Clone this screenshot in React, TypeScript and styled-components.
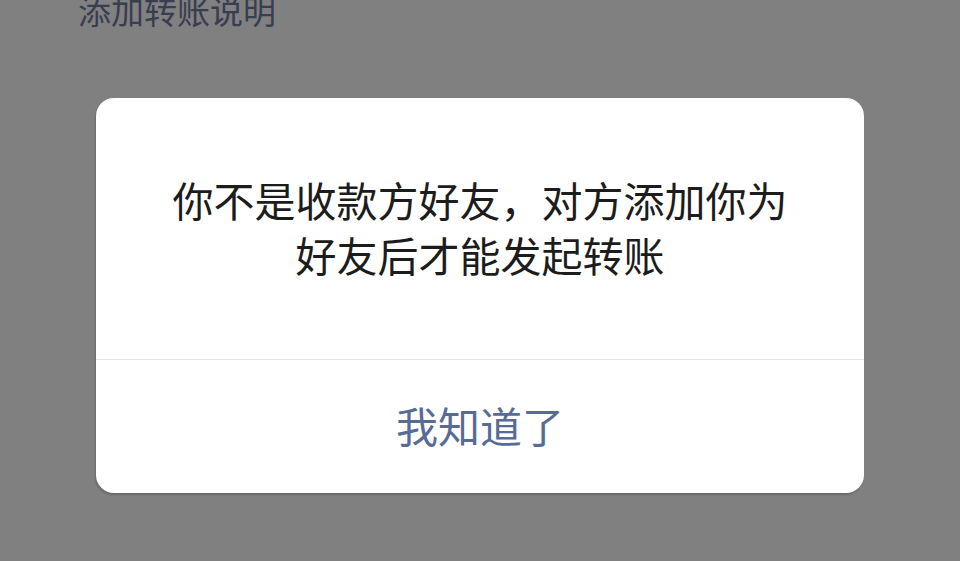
import * as React from "react";
import styled, { createGlobalStyle } from "styled-components";

const GlobalStyle = createGlobalStyle`
  html, body {
    margin: 0;
    padding: 0;
    background: #808080;
    font-family: "Noto Sans CJK SC", "Noto Sans", sans-serif;
  }
`;

const Page = styled.div`
  position: relative;
  width: 960px;
  height: 561px;
  overflow: hidden;
  background: #808080;
`;

const PageLabel = styled.div`
  padding-left: 78px;
  margin-top: -8px;
  font-size: 33px;
  line-height: 36px;
  color: #383d50;
`;

const Overlay = styled.div`
  position: absolute;
  inset: 0;
  display: flex;
  justify-content: center;
  align-items: flex-start;
  padding-top: 98px;
`;

const Dialog = styled.div`
  width: 768px;
  background: #ffffff;
  border-radius: 18px;
  box-shadow: -1px 2px 2px rgba(0, 0, 0, 0.18);
  overflow: hidden;
`;

const Body = styled.div`
  height: 262px;
  box-sizing: border-box;
  padding: 74px 30px 0;
  text-align: center;
  font-size: 41px;
  line-height: 55px;
  color: #1c1c1c;
  border-bottom: 1px solid #e3e3e3;
`;

const Action = styled.button`
  display: flex;
  width: 100%;
  height: 133px;
  align-items: center;
  justify-content: center;
  padding: 0 0 4px;
  border: 0;
  background: transparent;
  font-family: inherit;
  font-size: 42px;
  color: #576b95;
  cursor: pointer;
`;

export default function App() {
  return (
    <Page>
      <GlobalStyle />
      <PageLabel>添加转账说明</PageLabel>
      <Overlay>
        <Dialog>
          <Body>
            你不是收款方好友，对方添加你为
            <br />
            好友后才能发起转账
          </Body>
          <Action>我知道了</Action>
        </Dialog>
      </Overlay>
    </Page>
  );
}
